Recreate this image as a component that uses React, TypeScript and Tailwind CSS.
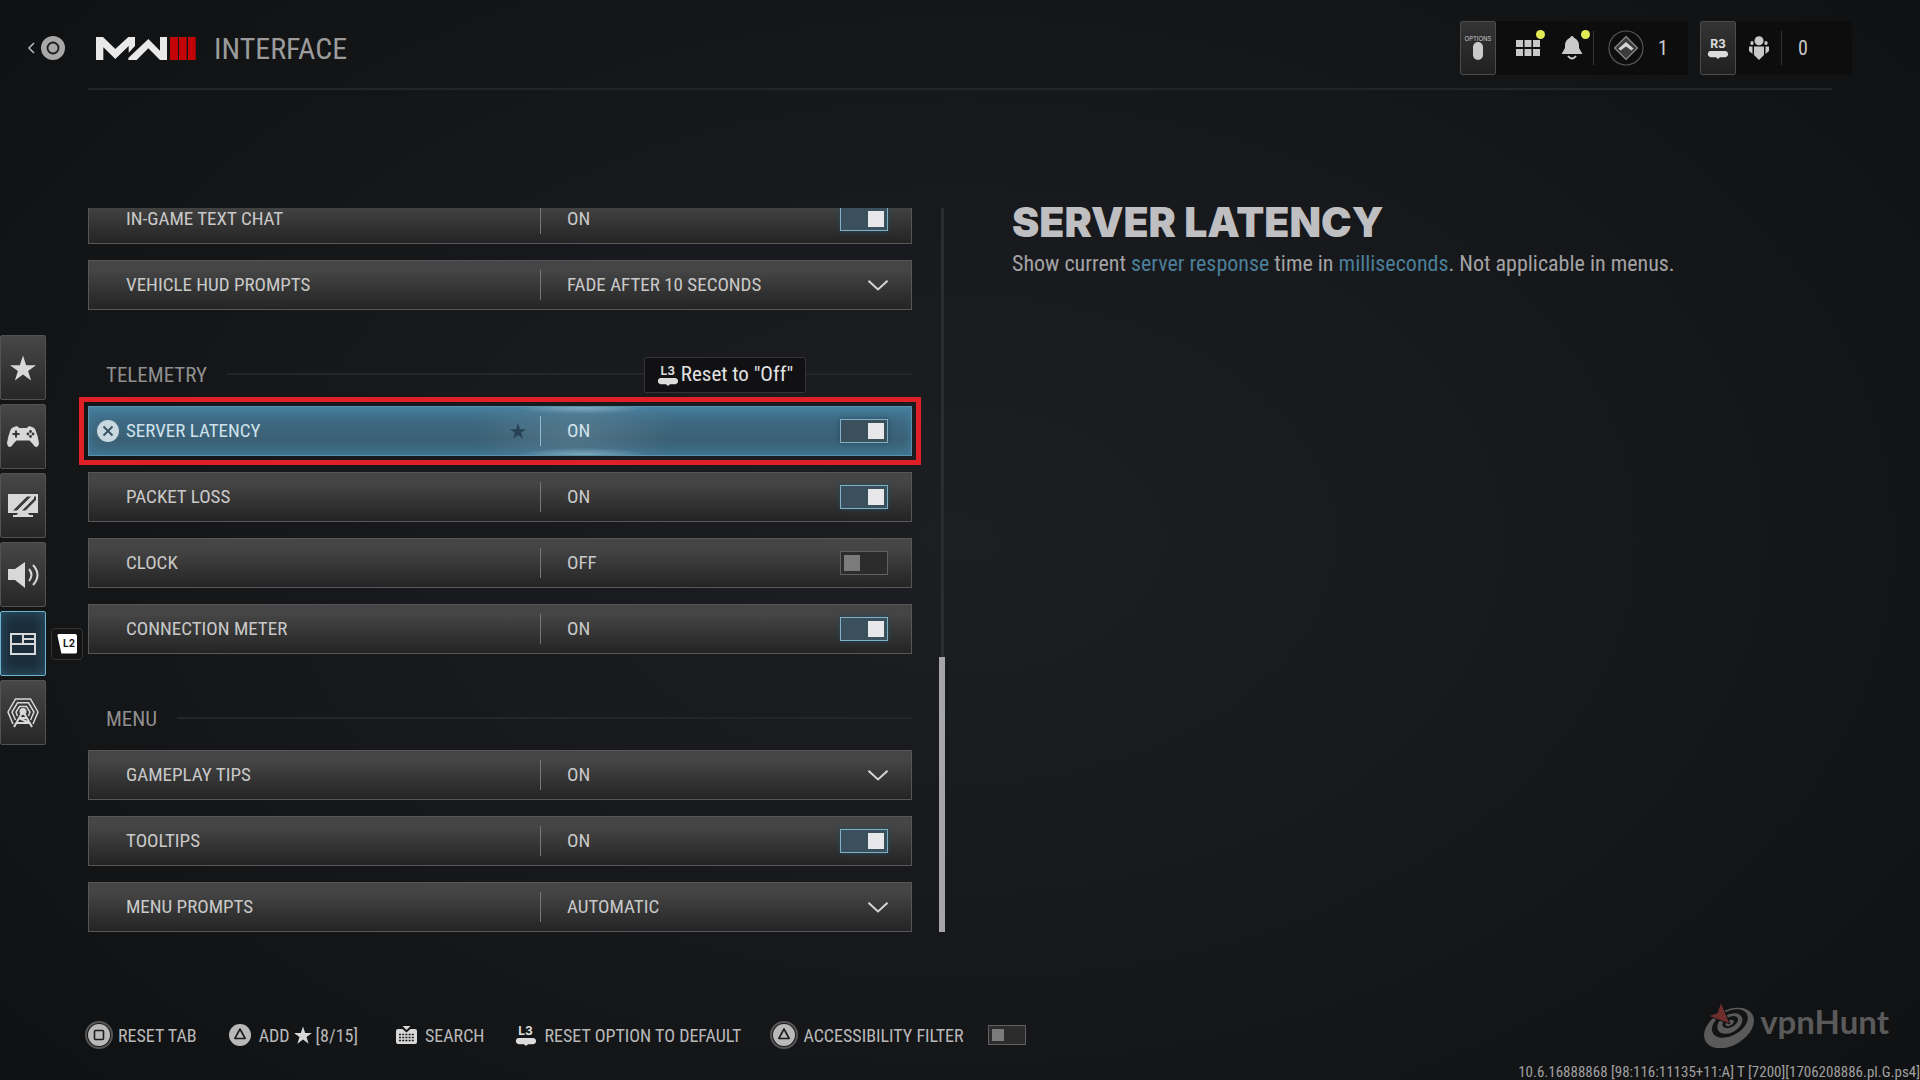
import { useState } from "react";
import type { ReactNode } from "react";
import clsx from "clsx";

type Setting = {
  id: string;
  label: string;
  kind: "toggle" | "select";
  value: string;
  options?: string[];
  starred?: boolean;
  hint?: string;
};

type Section = {
  title?: string;
  settings: Setting[];
};

const SECTIONS: Section[] = [
  {
    settings: [
      { id: "text-chat", label: "IN-GAME TEXT CHAT", kind: "toggle", value: "ON" },
      { id: "vehicle-hud", label: "VEHICLE HUD PROMPTS", kind: "select", value: "FADE AFTER 10 SECONDS", options: ["FADE AFTER 10 SECONDS", "ON", "OFF"] },
    ],
  },
  {
    title: "TELEMETRY",
    settings: [
      { id: "server-latency", label: "SERVER LATENCY", kind: "toggle", value: "ON", starred: true, hint: 'Reset to "Off"' },
      { id: "packet-loss", label: "PACKET LOSS", kind: "toggle", value: "ON" },
      { id: "clock", label: "CLOCK", kind: "toggle", value: "OFF" },
      { id: "connection-meter", label: "CONNECTION METER", kind: "toggle", value: "ON" },
    ],
  },
  {
    title: "MENU",
    settings: [
      { id: "gameplay-tips", label: "GAMEPLAY TIPS", kind: "select", value: "ON", options: ["ON", "OFF"] },
      { id: "tooltips", label: "TOOLTIPS", kind: "toggle", value: "ON" },
      { id: "menu-prompts", label: "MENU PROMPTS", kind: "select", value: "AUTOMATIC", options: ["AUTOMATIC", "ON", "OFF"] },
    ],
  },
];

const STAR = "M12 0L14.9 8.9H24L16.7 14.3L19.5 23L12 17.6L4.5 23L7.3 14.3L0 8.9H9.1Z";

function Star({ className }: { className: string }) {
  return (
    <svg viewBox="0 0 24 23" className={className} fill="currentColor" aria-hidden="true">
      <path d={STAR} />
    </svg>
  );
}

function ShapeButton({ shape, ring }: { shape: "square" | "triangle" | "cross"; ring?: boolean }) {
  return (
    <svg viewBox="0 0 30 30" className="size-[30px] shrink-0" fill="none" aria-hidden="true">
      {ring && <circle cx="15" cy="15" r="13" fill="#1b1b1b" stroke="#555" strokeWidth="2" />}
      <circle cx="15" cy="15" r="11" fill="currentColor" />
      {shape === "square" && <rect x="10.5" y="10.5" width="9" height="9" rx="1" stroke="#1b1b1b" strokeWidth="1.6" />}
      {shape === "triangle" && <path d="M15 9L20.2 18.5H9.8Z" stroke="#1b1b1b" strokeWidth="1.6" strokeLinejoin="round" />}
      {shape === "cross" && <path d="M10.5 10.5L19.5 19.5M19.5 10.5L10.5 19.5" stroke="#34505f" strokeWidth="1.8" />}
    </svg>
  );
}

function StickPress({ label }: { label: string }) {
  return (
    <span className="flex w-[22px] flex-col items-center gap-px font-['Inter','Liberation_Sans',sans-serif] text-[12px] leading-[11px] font-bold text-[#dcdcdc]">
      {label}
      <svg viewBox="0 0 22 9" className="h-[9px] w-[22px]" fill="currentColor" aria-hidden="true">
        <path d="M3.500 1h15a3.200 3.200 0 0 1 0 6.300h-5.500L11 9L9 7.300H3.500a3.200 3.200 0 0 1 0-6.300Z" />
      </svg>
    </span>
  );
}

function Logo() {
  return (
    <svg viewBox="0 0 300 69" className="h-[23px] w-[100px]" role="img" aria-label="MW III">
      <g fill="#e9e9e9">
        <path d="M0 69V0H21L58 36L97 0H117V27L98 47V27L58 66L22 31V69Z" />
        <path d="M97 69V63L157 6L192 41V0H213V69H192L157 34L122 69Z" />
      </g>
      <g fill="#c20406">
        <path d="M222 0H246V69H222ZM249 0H272V69H249ZM276 0H299V69H276Z" />
      </g>
    </svg>
  );
}

function Toggle({ id, checked, onChange, small }: { id: string; checked: boolean; onChange: () => void; small?: boolean }) {
  return (
    <input
      id={id}
      type="checkbox"
      checked={checked}
      onChange={onChange}
      className={clsx(
        "shrink-0 appearance-none border p-[3px] before:block",
        small ? "h-5 w-[38px] before:size-3" : "h-6 w-12 before:size-4",
        checked
          ? "border-[#7fb0c6] bg-[#3a505c] shadow-[0_0_5px_#234b60] before:ml-auto before:bg-[#e8e8ea]"
          : "border-[#606060] bg-[#2c2c2d] before:bg-[#7b7b7b]",
      )}
    />
  );
}

function SettingRow({ setting, active }: { setting: Setting; active: boolean }) {
  const [value, setValue] = useState(setting.value);

  return (
    <div
      className={clsx(
        "relative grid h-[50px] shrink-0 grid-cols-[451fr_371fr] border text-[19px]",
        active
          ? "border-[#5a92ad] bg-[radial-gradient(ellipse_65px_7px_at_60%_0%,#a5c4d2cc,#a5c4d200),radial-gradient(ellipse_65px_7px_at_60%_100%,#a5c4d2cc,#a5c4d200),radial-gradient(ellipse_100px_60px_at_59%_50%,#6b8c9d77,#6b8c9d00),linear-gradient(#457b99,#3d6880_35%,#3b6075_65%,#3d6c86)] text-[#cfe2ec] shadow-[inset_0_0_12px_#4a8aab99] outline-[5px] outline-offset-4 outline-[#df2027] outline-solid"
          : "border-[#575757] bg-linear-to-b from-[#454545] from-20% to-[#242424] text-[#c9c9c9]",
      )}
    >
      <div className="relative flex items-center pl-[37px]">
        {active && (
          <span className="absolute left-1 text-[#c8d8e0]">
            <ShapeButton shape="cross" />
          </span>
        )}
        <label htmlFor={setting.id}>{setting.label}</label>
        {setting.starred && <Star className="mr-[14px] ml-auto size-4 text-[#274254]" />}
      </div>

      <div className="flex items-center pr-[23px]">
        <span className={clsx("h-[30px] w-px", active ? "bg-[#8fb9cc]" : "bg-[#777]")} />
        {setting.kind === "toggle" ? (
          <>
            <span className="ml-[26px] flex-1">{value}</span>
            <Toggle id={setting.id} checked={value === "ON"} onChange={() => setValue(value === "ON" ? "OFF" : "ON")} />
          </>
        ) : (
          <div className="relative flex flex-1 items-center">
            <select
              id={setting.id}
              value={value}
              onChange={(e) => setValue(e.target.value)}
              className="w-full appearance-none bg-transparent pl-[26px] outline-none"
            >
              {setting.options?.map((option) => (
                <option key={option}>{option}</option>
              ))}
            </select>
            <svg viewBox="0 0 20 11" className="pointer-events-none absolute right-0 h-[11px] w-5" fill="none" stroke="#d4d4d4" strokeWidth="2" aria-hidden="true">
              <path d="M0.500 0.800L10 9.500L19.500 0.800" />
            </svg>
          </div>
        )}
      </div>

      {setting.hint && (
        <div role="tooltip" className="absolute right-[105px] bottom-[62px] flex h-9 w-[162px] items-center justify-center gap-0.5 rounded-xs border border-[#343435] bg-[#111113] text-[21px] text-[#e2e2e2]">
          <StickPress label="L3" />
          {setting.hint}
        </div>
      )}
    </div>
  );
}

function RailButton({ label, active, children }: { label: string; active?: boolean; children: ReactNode }) {
  return (
    <button
      aria-label={label}
      className={clsx(
        "flex h-[65px] w-[46px] items-center justify-center rounded-xs border text-[#d8d8d8]",
        active
          ? "border-[#6fb4cf] bg-[#1b2d3a] shadow-[inset_0_0_14px_#2c566d]"
          : "border-[#525252] bg-linear-to-b from-[#474747] to-[#272727]",
      )}
    >
      {children}
    </button>
  );
}

function Rail() {
  return (
    <nav className="flex flex-col gap-1 pt-[127px]">
      <RailButton label="Favorites">
        <Star className="size-[26px]" />
      </RailButton>
      <RailButton label="Controller">
        <svg viewBox="0 0 32 21" className="h-[21px] w-8" aria-hidden="true">
          <path fill="currentColor" d="M7 1Q9 0 11 .5L12 2H20L21 .5Q23 0 25 1Q27.500 1.500 28.500 4Q31 10 32 17Q31.500 21 29 21Q27 20.500 25 17L22.500 14.500H9.500L7 17Q5 20.500 3 21Q.500 21 0 17Q1 10 3.500 4Q4.500 1.500 7 1Z" />
          <path stroke="#363636" strokeWidth="2" d="M5.500 8H12.500M9 4.500V11.500" />
          <g fill="#363636">
            <circle cx="23.500" cy="5.500" r="1.400" />
            <circle cx="23.500" cy="10.500" r="1.400" />
            <circle cx="21" cy="8" r="1.400" />
            <circle cx="26" cy="8" r="1.400" />
          </g>
        </svg>
      </RailButton>
      <RailButton label="Graphics">
        <svg viewBox="0 0 30 23" className="h-[23px] w-[30px]" aria-hidden="true">
          <path fill="currentColor" d="M0 0H30V19H20L21.500 21H25V23H5V21H8.500L10 19H0Z" />
          <path fill="#393939" d="M5 16.500L19 2.500H23L9 16.500ZM14 16.500L26 4.500V2.500H28V6L17.500 16.500Z" />
        </svg>
      </RailButton>
      <RailButton label="Audio">
        <svg viewBox="0 0 31 26" className="h-[26px] w-[31px]" fill="none" aria-hidden="true">
          <path fill="currentColor" d="M0 7H7L17 0V26L7 18H0Z" />
          <path stroke="currentColor" strokeWidth="2" d="M21 7Q26 13 21 19M25 3Q34 13 25 23" />
        </svg>
      </RailButton>
      <div className="flex items-center gap-[5px]">
        <RailButton label="Interface" active>
          <svg viewBox="0 0 26 22" className="h-[22px] w-[26px]" fill="none" stroke="currentColor" strokeWidth="2" aria-hidden="true">
            <path d="M1 1H25V21H1ZM1 11H25M13 1V11M13 6H25" />
          </svg>
        </RailButton>
        <kbd className="flex size-8 items-center justify-center rounded-sm border border-[#333] bg-[#141415]">
          <span className="flex h-5 w-5 items-center justify-end rounded-xs bg-white pr-[2px] font-['Inter','Liberation_Sans',sans-serif] text-[10px] font-bold text-[#1a1a1a] [clip-path:polygon(0_0,100%_0,100%_100%,22%_100%)]">
            L2
          </span>
        </kbd>
      </div>
      <RailButton label="Account and network">
        <svg viewBox="0 0 32 30" className="h-[30px] w-8" fill="none" stroke="currentColor" strokeWidth="1.500" aria-hidden="true">
          <path d="M6 26L1 14L8.500 1H23.500L31 14L26 26" />
          <path d="M8.500 22L5 14L10.500 4.800H21.500L27 14L23.500 22" />
          <path d="M10.500 18L9 14L12.500 8.500H19.500L23 14L21.500 18" />
          <circle cx="16" cy="13.500" r="2.800" fill="currentColor" />
          <path strokeWidth="2" d="M15 15L7 29M17 15L25 29M12 20H20M9.500 25H22.500M12 20L22.500 25" />
        </svg>
      </RailButton>
    </nav>
  );
}

function Header() {
  return (
    <header className="mr-[68px] flex h-[88px] items-center pt-2">
      <button aria-label="Back" className="flex w-24 shrink-0 items-center pl-[27px]">
        <svg viewBox="0 0 38 24" className="h-6 w-[38px]" fill="none" aria-hidden="true">
          <path d="M7 7L2 12L7 17" stroke="#b5b5b5" strokeWidth="1.600" />
          <circle cx="26" cy="12" r="12" fill="#a8a8a8" />
          <circle cx="26" cy="12" r="5.500" fill="#a8a8a8" stroke="#1c1c1c" strokeWidth="1.800" />
        </svg>
      </button>
      <Logo />
      <h1 className="mt-0.5 ml-[18px] text-[30px] leading-9 text-[#9b9b9b]">INTERFACE</h1>

      <div className="ml-auto flex h-[54px] gap-3 text-[#c9c9c9]">
        <div className="flex w-[228px] items-center bg-[#0d0d0e]">
          <button className="flex h-full w-9 shrink-0 flex-col items-center justify-center rounded-xs border border-[#4c4c4c] bg-linear-to-b from-[#343434] to-[#202020] font-['Inter','Liberation_Sans',sans-serif] text-[6px] leading-[6px]">
            OPTIONS
            <svg viewBox="0 0 10 18" className="h-[18px] w-2.5" fill="currentColor" aria-hidden="true">
              <rect width="10" height="18" rx="5" />
            </svg>
          </button>
          <button aria-label="Apps" className="relative ml-5">
            <svg viewBox="0 0 24 16" className="h-4 w-6" fill="currentColor" aria-hidden="true">
              <path d="M0 0H7V7H0ZM8.500 0H15.500V7H8.500ZM17 0H24V7H17ZM0 9H7V16H0ZM8.500 9H15.500V16H8.500ZM17 9H24V16H17Z" />
            </svg>
            <span className="absolute -top-[10px] -right-[5px] size-[9px] rounded-full bg-[#e2ea55]" />
          </button>
          <button aria-label="Notifications" className="relative ml-[21px]">
            <svg viewBox="0 0 22 24" className="h-6 w-[22px]" aria-hidden="true">
              <path fill="currentColor" d="M11 0Q12.500 0 13 1.700Q17.500 3.500 18 9V12L21.500 18H.500L4 12V9Q4.500 3.500 9 1.700Q9.500 0 11 0Z" />
              <path fill="none" stroke="currentColor" strokeWidth="2" d="M7 20Q11 25 15 20" />
            </svg>
            <span className="absolute -top-[6px] -right-[7px] size-[9px] rounded-full bg-[#e2ea55]" />
          </button>
          <span className="ml-[10px] h-[34px] w-px bg-[#333]" />
          <svg viewBox="0 0 36 36" className="ml-[14px] size-9" fill="none" aria-hidden="true">
            <circle cx="18" cy="18" r="17" stroke="#565656" strokeWidth="1.200" />
            <path d="M18 6.500L29.500 18L18 29.500L6.500 18Z" fill="#3b3b3b" stroke="#8c8c8c" strokeWidth="1.200" />
            <path d="M18 12L25.500 18.500L23.500 20.500L18 16.500L12.500 20.500L10.500 18.500Z" fill="#d2d2d2" />
          </svg>
          <span className="ml-[14px] text-[20px]">1</span>
        </div>
        <div className="flex w-[152px] items-center bg-[#0d0d0e]">
          <button className="flex h-full w-9 shrink-0 items-center justify-center rounded-xs border border-[#4c4c4c] bg-linear-to-b from-[#343434] to-[#202020]">
            <StickPress label="R3" />
          </button>
          <svg viewBox="0 0 20 24" className="ml-[13px] h-6 w-5" fill="currentColor" aria-hidden="true">
            <circle cx="10" cy="4.800" r="4.500" />
            <path d="M5 10.500H15V19L10 24L5 19Z" />
            <rect x="1.500" y="5" width="3" height="4" rx="1.500" />
            <rect x="15.500" y="5" width="3" height="4" rx="1.500" />
            <path d="M0 10.500H3.500V18L0 15ZM20 10.500H16.500V18L20 15Z" />
          </svg>
          <span className="ml-[12px] h-[34px] w-px bg-[#333]" />
          <span className="ml-4 text-[20px]">0</span>
        </div>
      </div>
    </header>
  );
}

function Footer() {
  const [filter, setFilter] = useState(false);

  return (
    <footer className="mt-auto flex items-end justify-between pl-[84px]">
      <div className="mb-[30px] flex h-[30px] items-center text-[18px] text-[#b9b9b9]">
        <button className="flex items-center gap-1">
          <ShapeButton shape="square" ring />
          RESET TAB
        </button>
        <button className="ml-7 flex items-center gap-1">
          <ShapeButton shape="triangle" />
          <span className="flex items-center gap-1">
            ADD <Star className="size-[18px] text-[#d8d8d8]" /> [8/15]
          </span>
        </button>
        <button className="ml-[38px] flex items-center gap-2">
          <svg viewBox="0 0 21 18" className="h-[18px] w-[21px]" aria-hidden="true">
            <path fill="#d8d8d8" d="M6.500 0H14.500L10.500 4ZM2 3H6.500L10.500 6.500L14.500 3H19A2 2 0 0 1 21 5V16A2 2 0 0 1 19 18H2A2 2 0 0 1 0 16V5A2 2 0 0 1 2 3Z" />
            <path stroke="#1a1a1a" strokeWidth="1.600" strokeDasharray="2 1.200" d="M3 8.500H18.500M3 11.500H18.500M3 14.500H18.500" />
          </svg>
          SEARCH
        </button>
        <button className="ml-[30px] flex items-center gap-2">
          <StickPress label="L3" />
          RESET OPTION TO DEFAULT
        </button>
        <div className="ml-7 flex items-center gap-1">
          <ShapeButton shape="triangle" ring />
          <label htmlFor="accessibility-filter">ACCESSIBILITY FILTER</label>
          <span className="ml-5 flex">
            <Toggle id="accessibility-filter" small checked={filter} onChange={() => setFilter(!filter)} />
          </span>
        </div>
      </div>

      <div className="flex flex-col items-end">
        <div className="mr-[31px] mb-4 flex items-center gap-1.5 font-['Lato','Liberation_Sans',sans-serif] text-[33px] leading-[38px] font-bold text-[#5a5a5b]">
          {/* tilted target with an arrow in it */}
          <svg viewBox="0 0 50 46" className="h-[46px] w-[50px]" aria-hidden="true">
            <g transform="rotate(-30 25 26)">
              <ellipse cx="25" cy="26" rx="27" ry="17.500" fill="#5a5a5b" />
              <ellipse cx="28" cy="22.500" rx="19.500" ry="12" fill="#121315" />
              <ellipse cx="28" cy="22.500" rx="13.500" ry="9" fill="#5a5a5b" />
              <ellipse cx="29" cy="21.500" rx="8.500" ry="5" fill="#121315" />
              <ellipse cx="28" cy="22" rx="4.500" ry="2.500" fill="#5a5a5b" />
            </g>
            <path d="M17 0L26 22L4 14L13 11Z" fill="#6e2e2d" stroke="#121314" strokeWidth="1" />
          </svg>
          <span className="pb-2">vpnHunt</span>
        </div>
        <p className="text-[15px] leading-4 text-[#a0a0a0]">10.6.16888868 [98:116:11135+11:A] T [7200][1706208886.pl.G.ps4]</p>
      </div>
    </footer>
  );
}

export default function App() {
  return (
    <div className="flex min-h-screen flex-col bg-[#101112] bg-[radial-gradient(ellipse_65%_75%_at_50%_50%,#1d1e22,#18191c_45%,#101112)] font-['Roboto_Condensed','Liberation_Sans_Narrow','Roboto',sans-serif]">
      <Header />
      <div className="mx-[88px] h-0.5 shrink-0 bg-[#242527]" />

      <main className="mt-[118px] grid grid-cols-[88px_824fr_100px_820fr_88px]">
        <Rail />

        {/* settings list, scrolled to the end */}
        <div className="flex h-[724px] flex-col justify-end overflow-x-visible overflow-y-clip">
          {SECTIONS.map((section, i) => (
            <section key={i} className="shrink-0">
              {section.title && (
                <div className="flex h-24 items-center gap-5 pt-8 pl-[18px]">
                  <h2 className="pt-0.5 text-[21px] leading-7 text-[#8f8f90]">{section.title}</h2>
                  <div className="h-0.5 flex-1 bg-[#242528]" />
                </div>
              )}
              <div className="flex flex-col gap-4">
                {section.settings.map((setting) => (
                  <SettingRow key={setting.id} setting={setting} active={setting.id === "server-latency"} />
                ))}
              </div>
            </section>
          ))}
        </div>

        {/* scrollbar */}
        <div className="ml-[27px] flex w-1.5 flex-col items-center">
          <div className="w-[3px] flex-1 bg-[#2b2c2f]" />
          <div className="h-[38%] w-full bg-[#a6a5a9]" />
        </div>

        <aside>
          <h2 className="font-['Inter','Liberation_Sans',sans-serif] text-[41px] leading-[28px] font-black text-[#bfbfc1]">SERVER LATENCY</h2>
          <p className="mt-4 text-[22px] leading-6 text-[#a3a3a5]">
            Show current <span className="text-[#4b7f99]">server response</span> time in <span className="text-[#4b7f99]">milliseconds</span>. Not applicable in menus.
          </p>
        </aside>
      </main>

      <Footer />
    </div>
  );
}
